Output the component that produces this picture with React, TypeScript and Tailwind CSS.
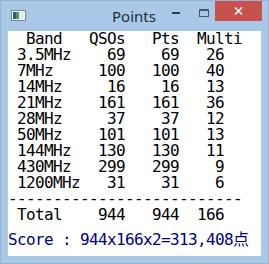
import React from "react";

const rows: [string, string, string, string][] = [
  ["3.5MHz", "69", "69", "26"],
  ["7MHz", "100", "100", "40"],
  ["14MHz", "16", "16", "13"],
  ["21MHz", "161", "161", "36"],
  ["28MHz", "37", "37", "12"],
  ["50MHz", "101", "101", "13"],
  ["144MHz", "130", "130", "11"],
  ["430MHz", "299", "299", "9"],
  ["1200MHz", "31", "31", "6"],
];

function fmt(name: string, q: string, p: string, m: string) {
  return " " + name.padEnd(8) + q.padStart(4) + p.padStart(6) + m.padStart(5);
}

export default function App() {
  const lines = [
    "  Band   QSOs   Pts  Multi",
    ...rows.map((r) => fmt(r[0], r[1], r[2], r[3])),
    "-".repeat(26),
    fmt("Total", "944", "944", "166"),
  ];
  return (
    <div className="w-[269px] h-[264px] bg-[#a9c8e8] border border-[#94b4d6] flex flex-col overflow-hidden">
      {/* title bar */}
      <div className="h-[30px] flex items-start shrink-0">
        <div className="ml-[10px] mt-[9px] flex">
          <svg width="15" height="11" viewBox="0 0 15 11">
            <rect x="0.5" y="0.5" width="14" height="10" fill="#f4f6f8" stroke="#7d8b99" />
            <rect x="2" y="2" width="3" height="7" fill="#2f5f6a" />
            <rect x="5" y="2" width="3" height="7" fill="#4f9a6c" />
            <rect x="8" y="2" width="5" height="7" fill="#e6ecf1" />
          </svg>
        </div>
        <div
          className="ml-[86px] mt-[5px] text-[15px] leading-[20px] text-[#1f2b38]"
          style={{ fontFamily: '"Noto Sans", "Open Sans", sans-serif' }}
        >
          Points
        </div>
        <div className="flex-1" />
        <div className="mt-[11px] w-[8px] h-[2px] bg-[#2d3a47]" />
        <div className="ml-[19px] mt-[8px] w-[10px] h-[8px] border border-[#4a5866] border-t-2" />
        <div className="ml-[6px] mr-[6px] mt-[-1px] w-[47px] h-[21px] bg-[#c7514c] flex items-center justify-center">
          <svg width="9" height="8" viewBox="0 0 9 8">
            <path d="M1 0.5 L8 7.5 M8 0.5 L1 7.5" stroke="#ffffff" strokeWidth="1.6" />
          </svg>
        </div>
      </div>
      {/* client */}
      <div className="flex-1 mx-[7px] mb-[7px] bg-white">
        <div
          className="text-[16px] leading-[16px] tracking-[-0.63px] text-black whitespace-pre flex flex-col"
          style={{ fontFamily: '"DejaVu Sans Mono", "Liberation Mono", monospace' }}
        >
          {lines.map((l, i) => (
            <div key={i} className="h-[16px]">
              {l}
            </div>
          ))}
          <div
            className="mt-[7px] h-[16px] text-[#000080]"
            style={{
              fontFamily:
                '"DejaVu Sans Mono", "Liberation Mono", "Noto Sans CJK JP", monospace',
            }}
          >
            {"Score : 944x166x2=313,408"}
            <span
              className="tracking-normal"
              style={{ fontFamily: '"Noto Sans CJK JP", sans-serif' }}
            >
              点
            </span>
          </div>
        </div>
      </div>
    </div>
  );
}
